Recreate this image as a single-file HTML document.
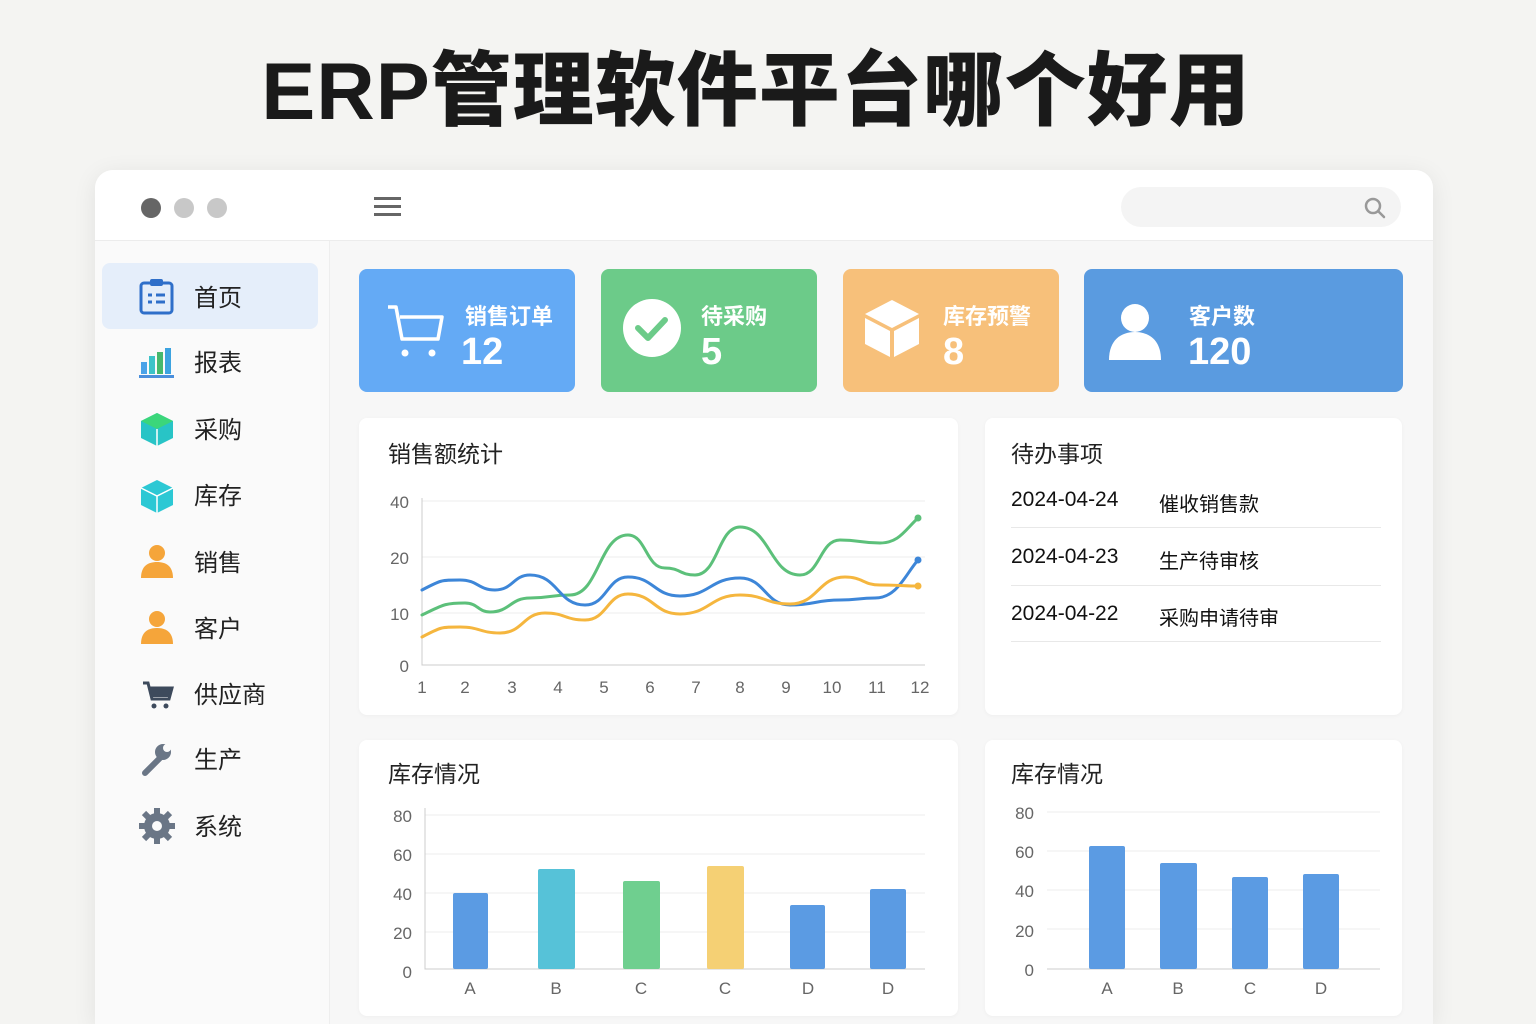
<!DOCTYPE html>
<html><head><meta charset="utf-8"><style>
*{margin:0;padding:0;box-sizing:border-box}
body{width:1536px;height:1024px;overflow:hidden;background:#f4f4f2;font-family:"Liberation Sans","Noto Sans CJK SC",sans-serif;position:relative;color:#222}
.abs{position:absolute}
h1{position:absolute;left:0;width:1536px;top:26px;text-align:center;font-size:81px;font-weight:900;color:#1a1a1a;letter-spacing:1px;margin-left:-12px}
.win{left:95px;top:170px;width:1338px;height:854px;background:#f7f7f7;border-radius:18px 18px 0 0;box-shadow:0 4px 24px rgba(0,0,0,.08);overflow:hidden}
.hdr{left:0;top:0;width:1338px;height:71px;background:#fff;border-bottom:1px solid #ececec}
.side{left:0;top:71px;width:235px;height:900px;background:#fafafa;border-right:1px solid #eee}
.dot{width:20px;height:20px;border-radius:50%;top:198px}
.item{position:absolute;left:194px;font-size:24px;color:#222}
.card{border-radius:8px;color:#fff}
.card .t{position:absolute;font-size:22px;font-weight:bold}
.card .n{position:absolute;font-size:38px;font-weight:bold}
.panel{background:#fff;border-radius:8px;box-shadow:0 1px 4px rgba(0,0,0,.04)}
.pt{position:absolute;font-size:23px;color:#222}
.ax{font-size:17px;fill:#666;font-family:"Liberation Sans",sans-serif}
.todo{position:absolute;left:1011px;font-size:21px;color:#111}
.todo span{position:absolute;left:148px;white-space:nowrap;font-size:20px}
.hr{position:absolute;left:1011px;width:370px;height:1px;background:#e8e8e8}
</style></head><body>
<h1>ERP管理软件平台哪个好用</h1>
<div class="abs win">
 <div class="abs hdr"></div>
 <div class="abs side"></div>
</div>
<div class="abs dot" style="left:141px;background:#666"></div>
<div class="abs dot" style="left:174px;background:#c8c8c8"></div>
<div class="abs dot" style="left:207px;background:#c8c8c8"></div>
<div class="abs" style="left:374px;top:197px;width:27px;height:3px;background:#666;box-shadow:0 8px 0 #666,0 16px 0 #666"></div>
<div class="abs" style="left:1121px;top:187px;width:280px;height:40px;border-radius:20px;background:#f4f4f4"></div>
<svg class="abs" style="left:1363px;top:196px" width="24" height="24" viewBox="0 0 24 24"><circle cx="10" cy="10" r="7" fill="none" stroke="#999" stroke-width="2.5"/><path d="M15 15l6 6" stroke="#999" stroke-width="2.5" stroke-linecap="round"/></svg>

<div class="abs" style="left:102px;top:263px;width:216px;height:66px;background:#e5eefa;border-radius:8px"></div>
<div class="item" style="top:278px">首页</div>
<div class="item" style="top:343px">报表</div>
<div class="item" style="top:410px">采购</div>
<div class="item" style="top:476px">库存</div>
<div class="item" style="top:543px">销售</div>
<div class="item" style="top:609px">客户</div>
<div class="item" style="top:675px">供应商</div>
<div class="item" style="top:740px">生产</div>
<div class="item" style="top:807px">系统</div>

<div class="abs card" style="left:359px;top:269px;width:216px;height:123px;background:#64aaf5"><div class="t" style="left:106px;top:30px">销售订单</div><div class="n" style="left:102px;top:62px">12</div></div>
<div class="abs card" style="left:601px;top:269px;width:216px;height:123px;background:#6ccb89"><div class="t" style="left:100px;top:30px">待采购</div><div class="n" style="left:100px;top:62px">5</div></div>
<div class="abs card" style="left:843px;top:269px;width:216px;height:123px;background:#f7c07a"><div class="t" style="left:100px;top:30px">库存预警</div><div class="n" style="left:100px;top:62px">8</div></div>
<div class="abs card" style="left:1084px;top:269px;width:319px;height:123px;background:#5a9be0"><div class="t" style="left:105px;top:30px">客户数</div><div class="n" style="left:104px;top:62px">120</div></div>

<div class="abs panel" style="left:359px;top:418px;width:599px;height:297px"></div>
<div class="abs panel" style="left:985px;top:418px;width:417px;height:297px"></div>
<div class="abs panel" style="left:359px;top:740px;width:599px;height:276px"></div>
<div class="abs panel" style="left:985px;top:740px;width:417px;height:276px"></div>
<div class="pt" style="left:388px;top:435px">销售额统计</div>
<div class="pt" style="left:1011px;top:435px">待办事项</div>
<div class="pt" style="left:388px;top:755px">库存情况</div>
<div class="pt" style="left:1011px;top:755px">库存情况</div>

<div class="todo" style="top:488px">2024-04-24<span>催收销售款</span></div>
<div class="hr" style="top:527px"></div>
<div class="todo" style="top:545px">2024-04-23<span>生产待审核</span></div>
<div class="hr" style="top:585px"></div>
<div class="todo" style="top:602px">2024-04-22<span>采购申请待审</span></div>
<div class="hr" style="top:641px"></div>

<svg class="abs" style="left:0;top:0" width="1536" height="1024">
<rect x="141" y="283" width="31" height="30" rx="3" fill="none" stroke="#2f6fc9" stroke-width="3"/><rect x="150" y="279" width="13" height="7" rx="2" fill="#2f6fc9"/><path d="M148 295h4M156 295h9M148 302h4M156 302h9" stroke="#2f6fc9" stroke-width="3"/>
<rect x="141" y="362" width="6" height="12" fill="#4aa3e8"/><rect x="149" y="356" width="6" height="18" fill="#3cc3c8"/><rect x="157" y="352" width="6" height="22" fill="#46b86d"/><rect x="165" y="348" width="6" height="26" fill="#3ca3e0"/><rect x="139" y="375" width="35" height="3" fill="#4a8fdc"/>
<path d="M157 413l16 8v17l-16 8-16-8v-17z" fill="#28c4c6"/><path d="M141 421l16 8 16-8-16-8z" fill="#3bd67a"/><path d="M157 429v17" stroke="#fff" stroke-width="1.5"/>
<path d="M157 480l16 8v17l-16 8-16-8v-17z" fill="#2cc8d4"/><path d="M141 488l16 8 16-8" fill="none" stroke="#fff" stroke-width="1.5"/><path d="M157 496v17" stroke="#fff" stroke-width="1.5"/>
<circle cx="157" cy="553" r="8" fill="#f5a53a"/><path d="M141 578c0-12 7-16 16-16s16 4 16 16z" fill="#f5a53a"/>
<circle cx="157" cy="619" r="8" fill="#f5a53a"/><path d="M141 644c0-12 7-16 16-16s16 4 16 16z" fill="#f5a53a"/>
<path d="M143 683h5l4 16h17l3-11h-22" fill="none" stroke="#3d4a5c" stroke-width="3"/><rect x="151" y="688" width="19" height="9" fill="#3d4a5c"/><circle cx="154" cy="706" r="2.5" fill="#3d4a5c"/><circle cx="166" cy="706" r="2.5" fill="#3d4a5c"/>
<path d="M145 773l15-15" stroke="#6a7686" stroke-width="6" stroke-linecap="round"/><circle cx="163" cy="752" r="8" fill="#6a7686"/><circle cx="167" cy="748" r="4" fill="#fafafa"/>
<circle cx="157" cy="826" r="13" fill="#6a7686"/><path d="M157 808v36M139 826h36M144 813l26 26M170 813l-26 26" stroke="#6a7686" stroke-width="6"/><circle cx="157" cy="826" r="5" fill="#fafafa"/>
<path d="M388 307h8l6 32h36l4-22h-42" fill="none" stroke="#fff" stroke-width="3.5" stroke-linejoin="round"/><circle cx="405" cy="353" r="3.5" fill="#fff"/><circle cx="432" cy="353" r="3.5" fill="#fff"/>
<circle cx="652" cy="328" r="29" fill="#fff"/><path d="M638 328l10 10 17-18" fill="none" stroke="#6ccb89" stroke-width="6" stroke-linecap="round" stroke-linejoin="round"/>
<path d="M892 300l27 14-27 14-27-14z" fill="#fff"/><path d="M865 318l25 13v26l-25-13z M894 331l25-13v26l-25 13z" fill="#fff"/>
<circle cx="1135" cy="318" r="14" fill="#fff"/><path d="M1109 360c0-20 12-28 26-28s26 8 26 28z" fill="#fff"/>
<g stroke="#eee" stroke-width="1"><path d="M422 501h503M422 557h503M422 613h503"/></g>
<path d="M422 498v167h503" fill="none" stroke="#ccc"/>
<g class="ax" text-anchor="end"><text x="409" y="508">40</text><text x="409" y="564">20</text><text x="409" y="620">10</text><text x="409" y="672">0</text></g>
<g class="ax" text-anchor="middle"><text x="422" y="693">1</text><text x="465" y="693">2</text><text x="512" y="693">3</text><text x="558" y="693">4</text><text x="604" y="693">5</text><text x="650" y="693">6</text><text x="696" y="693">7</text><text x="740" y="693">8</text><text x="786" y="693">9</text><text x="832" y="693">10</text><text x="877" y="693">11</text><text x="920" y="693">12</text></g>
<g fill="none" stroke-width="3" stroke-linecap="round">
<path stroke="#5cc07a" d="M422 615C443 605 444 603 465 603C478 603 478 612 490 612C510 612 510 598 530 598C550 598 550 595 570 595C599 595 599 535 628 535C646 535 646 568 665 568C680 568 680 575 695 575C718 575 718 527 740 527C770 527 770 575 800 575C820 575 820 540 840 540C860 540 860 543 880 543C899 543 905 530 918 518"/>
<path stroke="#3d86d8" d="M422 590C441 580 441 580 460 580C478 580 478 590 495 590C513 590 513 575 530 575C558 575 558 605 585 605C607 605 607 577 628 577C654 577 654 596 680 596C710 596 710 578 740 578C765 578 765 605 790 605C815 605 815 600 840 600C858 600 858 598 875 598C897 598 905 575 918 560"/>
<path stroke="#f5b63e" d="M422 637C441 627 441 627 460 627C480 627 480 633 500 633C523 633 523 613 545 613C565 613 565 620 585 620C607 620 607 594 628 594C654 594 654 614 680 614C710 614 710 595 740 595C765 595 765 604 790 604C818 604 818 577 845 577C863 577 863 585 880 585C899 585 905 586 918 586"/>
</g>
<circle cx="918" cy="518" r="3.5" fill="#5cc07a"/><circle cx="918" cy="560" r="3.5" fill="#3d86d8"/><circle cx="918" cy="586" r="3.5" fill="#f5b63e"/>
<g stroke="#eee"><path d="M425 815h500M425 854h500M425 893h500M425 932h500"/></g>
<path d="M425 808v161h500" fill="none" stroke="#ccc"/>
<g class="ax" text-anchor="end"><text x="412" y="822">80</text><text x="412" y="861">60</text><text x="412" y="900">40</text><text x="412" y="939">20</text><text x="412" y="978">0</text></g>
<rect x="453" y="893" width="35" height="76" rx="2" fill="#5b9be3"/><rect x="538" y="869" width="37" height="100" rx="2" fill="#56c2d8"/><rect x="623" y="881" width="37" height="88" rx="2" fill="#6fcf8f"/><rect x="707" y="866" width="37" height="103" rx="2" fill="#f5d074"/><rect x="790" y="905" width="35" height="64" rx="2" fill="#5b9be3"/><rect x="870" y="889" width="36" height="80" rx="2" fill="#5b9be3"/>
<g class="ax" text-anchor="middle"><text x="470" y="994">A</text><text x="556" y="994">B</text><text x="641" y="994">C</text><text x="725" y="994">C</text><text x="808" y="994">D</text><text x="888" y="994">D</text></g>
<g stroke="#eee"><path d="M1047 812h333M1047 851h333M1047 890h333M1047 929h333"/></g>
<path d="M1047 969h333" stroke="#ccc"/>
<g class="ax" text-anchor="end"><text x="1034" y="819">80</text><text x="1034" y="858">60</text><text x="1034" y="897">40</text><text x="1034" y="937">20</text><text x="1034" y="976">0</text></g>
<rect x="1089" y="846" width="36" height="123" rx="2" fill="#5b9be3"/><rect x="1160" y="863" width="37" height="106" rx="2" fill="#5b9be3"/><rect x="1232" y="877" width="36" height="92" rx="2" fill="#5b9be3"/><rect x="1303" y="874" width="36" height="95" rx="2" fill="#5b9be3"/>
<g class="ax" text-anchor="middle"><text x="1107" y="994">A</text><text x="1178" y="994">B</text><text x="1250" y="994">C</text><text x="1321" y="994">D</text></g>
</svg>
</body></html>
